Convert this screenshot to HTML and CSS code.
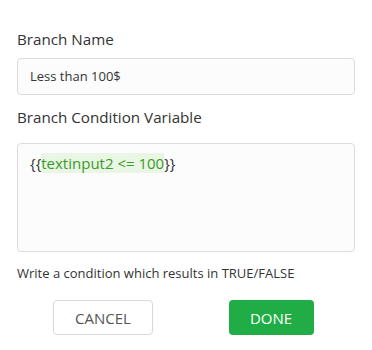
FILE: index.html
```html
<!DOCTYPE html>
<html>
<head>
<meta charset="utf-8">
<link rel="stylesheet" href="styles.css">
</head>
<body>
<div class="form">
  <label class="label">Branch Name</label>
  <div class="input">Less than 100$</div>
  <label class="label label-second">Branch Condition Variable</label>
  <div class="textarea"><span class="brace">{{</span><span class="expr">textinput2 &lt;= 100</span><span class="brace">}}</span></div>
  <p class="hint">Write a condition which results in TRUE/FALSE</p>
  <div class="actions">
    <button class="btn btn-cancel">CANCEL</button>
    <button class="btn btn-done">DONE</button>
  </div>
</div>
</body>
</html>
```
FILE: styles.css
```css
html, body {
  margin: 0;
  padding: 0;
  background: #ffffff;
}
body {
  font-family: "Open Sans", "DejaVu Sans", sans-serif;
  color: #333333;
}
.form {
  padding: 29px 17px 0 17px;
  display: flex;
  flex-direction: column;
}
.label {
  font-size: 15.2px;
  line-height: 20px;
  color: #333333;
  margin-bottom: 9px;
}
.label-second {
  margin-top: 12px;
  margin-bottom: 16px;
}
.input {
  height: 35px;
  border: 1px solid #dcdcdc;
  border-radius: 4px;
  background: #fcfcfc;
  box-sizing: content-box;
  padding: 0 12px;
  font-size: 13px;
  line-height: 35px;
  color: #333333;
}
.textarea {
  border: 1px solid #dcdcdc;
  border-radius: 4px;
  background: #fcfcfc;
  padding: 9px 12px;
  box-sizing: border-box;
  height: 109px;
  font-size: 15px;
  line-height: 20px;
  color: #333333;
}
.expr {
  color: #3a9a2a;
  background: #e9f6e4;
}
.hint {
  margin: 13px 0 0 0;
  font-size: 13px;
  line-height: 16px;
  color: #333333;
}
.actions {
  display: grid;
  grid-template-columns: 1fr 1fr;
  justify-items: center;
  margin-top: 19px;
  padding-left: 2px;
}
.btn {
  font-family: inherit;
  font-size: 15px;
  height: 35px;
  border-radius: 4px;
  cursor: pointer;
}
.btn-cancel {
  width: 100px;
  background: #ffffff;
  border: 1px solid #d9d9d9;
  color: #555555;
}
.btn-done {
  width: 85px;
  background: #21ad45;
  border: none;
  color: #ffffff;
}
```
